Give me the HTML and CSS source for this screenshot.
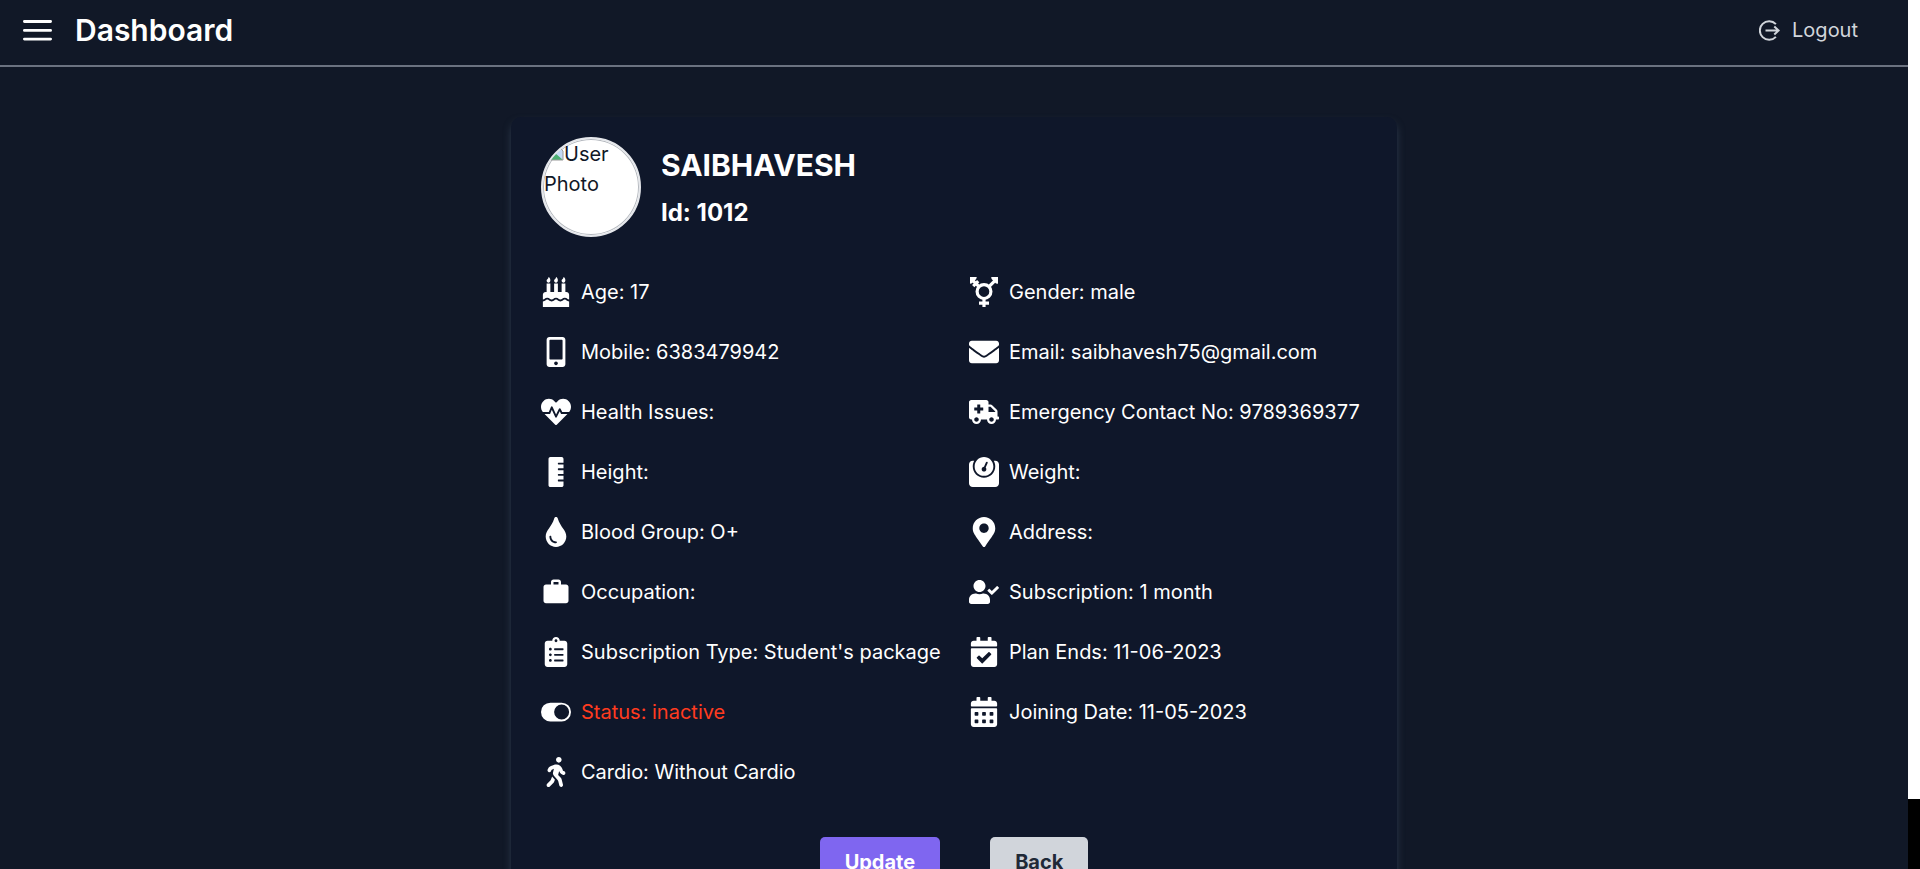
FILE: index.html
```html
<!DOCTYPE html>
<html lang="en">
<head>
<meta charset="utf-8">
<meta name="viewport" content="width=device-width, initial-scale=1">
<title>Dashboard</title>
<link rel="stylesheet" href="styles.css">
</head>
<body>
<div class="shell">
<div class="page">
  <header class="topbar">
    <button class="menu" type="button" aria-label="Open menu">
      <svg viewBox="0 0 30 30" fill="none" stroke="currentColor" stroke-width="2.8" stroke-linecap="round"><path d="M1.9 6.5h26.2M1.9 15.4h26.2M1.9 24.1h26.2"/></svg>
    </button>
    <h1 class="title">Dashboard</h1>
    <button class="logout" type="button">
      <svg viewBox="0 0 21 21" fill="none" stroke="currentColor" stroke-width="2"><path d="M16.9 4.1A9.3 9.3 0 1 0 16.9 16.9"/><path d="M6.5 10.5H19.5M15.3 6.6L19.6 10.5L15.3 14.4"/></svg>
      <span>Logout</span>
    </button>
  </header>
  <main class="main">
    <section class="card">
      <div class="profile">
        <div class="avatar"><svg viewBox="0 0 16 16"><path fill="#c3d9f5" d="M1 1h9l5 5v9H1z"/><path fill="#4caf72" d="M1 15l6-7 8 7z"/><path fill="none" stroke="#9a9a9a" d="M1 1h9l5 5v9H1z"/></svg>User Photo</div>
        <div class="who">
          <h2 class="name">SAIBHAVESH</h2>
          <p class="id">Id: 1012</p>
        </div>
      </div>
      <ul class="details">
        <li><svg viewBox="0 0 448 512"><path d="M448 384c-28.02 0-31.26-32-74.5-32-43.43 0-46.825 32-74.75 32-27.695 0-31.454-32-74.75-32-42.842 0-47.218 32-74.5 32-28.148 0-31.202-32-74.75-32-43.547 0-46.653 32-74.75 32v-80c0-26.5 21.5-48 48-48h16V112h64v144h64V112h64v144h64V112h64v144h16c26.5 0 48 21.5 48 48v80zm0 128H0v-96c43.356 0 46.767-32 74.75-32 27.951 0 31.253 32 74.75 32 42.843 0 47.217-32 74.5-32 28.148 0 31.201 32 74.75 32 43.357 0 46.767-32 74.75-32 27.488 0 31.252 32 74.5 32v96zM96 96c-17.75 0-32-14.25-32-32 0-31 32-23 32-64 12 0 32 29.5 32 56s-14.25 40-32 40zm128 0c-17.75 0-32-14.25-32-32 0-31 32-23 32-64 12 0 32 29.5 32 56s-14.25 40-32 40zm128 0c-17.75 0-32-14.25-32-32 0-31 32-23 32-64 12 0 32 29.5 32 56s-14.25 40-32 40z"/></svg>Age: 17</li>
        <li><svg viewBox="0 0 30 30"><g fill="none" stroke="#fff" stroke-width="3.2"><circle cx="15" cy="14.6" r="6.9"/><path d="M15 21.5V30M10 26.1h10M20 9.7L27 2.7M10 9.7L3 2.7M4.2 9.2L9.2 4.2"/></g><path d="M22.2 0H29v6.8L27 6.4 22.6 2zM1 0h6.8L7.2 2 3 6.2 1 6.8z"/></svg>Gender: male</li>
        <li><svg viewBox="0 0 320 512"><path d="M272 0H48C21.5 0 0 21.5 0 48v416c0 26.5 21.5 48 48 48h224c26.5 0 48-21.5 48-48V48c0-26.5-21.5-48-48-48zM160 480c-17.7 0-32-14.3-32-32s14.3-32 32-32 32 14.3 32 32-14.3 32-32 32zm112-108c0 6.6-5.4 12-12 12H60c-6.6 0-12-5.4-12-12V60c0-6.6 5.4-12 12-12h200c6.6 0 12 5.4 12 12v312z"/></svg>Mobile: 6383479942</li>
        <li><svg viewBox="0 0 512 512"><path d="M502.3 190.8c3.9-3.1 9.7-.2 9.7 4.7V400c0 26.5-21.5 48-48 48H48c-26.5 0-48-21.5-48-48V195.6c0-5 5.7-7.8 9.7-4.7 22.4 17.4 52.1 39.5 154.1 113.6 21.1 15.4 56.7 47.8 92.2 47.6 35.7.3 72-32.8 92.3-47.6 102-74.1 131.6-96.3 154-113.7zM256 320c23.2.4 56.6-29.2 73.4-41.4 132.7-96.3 142.8-104.7 173.4-128.7 5.8-4.5 9.2-11.5 9.2-18.9v-19c0-26.5-21.5-48-48-48H48c-26.5 0-48 21.5-48 48v19c0 7.4 3.4 14.3 9.2 18.9 30.6 23.9 40.7 32.4 173.4 128.7 16.8 12.2 50.2 41.8 73.4 41.4z"/></svg>Email: saibhavesh75@gmail.com</li>
        <li><svg viewBox="0 0 512 512"><path d="M320.2 243.8l-49.7 99.4c-6 12.1-23.4 11.7-28.9-.6l-56.9-126.3-30 71.7H60.6l182.5 186.5c7.1 7.3 18.6 7.3 25.7 0L451.4 288H342.3l-22.1-44.2zM473.7 73.9l-2.4-2.5c-51.5-52.6-135.8-52.6-187.4 0L256 100l-27.9-28.5c-51.5-52.7-135.9-52.7-187.4 0l-2.4 2.4C-10.4 123.7-12.5 203 31 256h102.4l35.9-86.2c5.4-12.9 23.6-13.2 29.4-.4l58.2 129.3 49-97.9c5.9-11.8 22.7-11.8 28.6 0l27.6 55.2H481c43.5-53 41.4-132.3-7.3-182.1z"/></svg>Health Issues:</li>
        <li><svg viewBox="0 0 640 512"><path d="M624 352h-16V243.9c0-12.7-5.1-24.9-14.1-33.9L494 110.1c-9-9-21.2-14.1-33.9-14.1H416V48c0-26.5-21.5-48-48-48H48C21.5 0 0 21.5 0 48v320c0 26.5 21.5 48 48 48h16c0 53 43 96 96 96s96-43 96-96h128c0 53 43 96 96 96s96-43 96-96h48c8.8 0 16-7.2 16-16v-32c0-8.8-7.2-16-16-16zM160 464c-26.5 0-48-21.5-48-48s21.5-48 48-48 48 21.5 48 48-21.5 48-48 48zm144-248c0 4.4-3.6 8-8 8h-56v56c0 4.4-3.6 8-8 8h-48c-4.4 0-8-3.6-8-8v-56h-56c-4.4 0-8-3.6-8-8v-48c0-4.4 3.6-8 8-8h56v-56c0-4.4 3.6-8 8-8h48c4.4 0 8 3.6 8 8v56h56c4.4 0 8 3.6 8 8v48zm176 248c-26.5 0-48-21.5-48-48s21.5-48 48-48 48 21.5 48 48-21.5 48-48 48zm80-208H416V144h44.1l99.9 99.9V256z"/></svg>Emergency Contact No: 9789369377</li>
        <li><svg viewBox="0 0 256 512"><path d="M168 416c-4.42 0-8-3.58-8-8v-16c0-4.42 3.58-8 8-8h88v-64h-88c-4.42 0-8-3.58-8-8v-16c0-4.42 3.58-8 8-8h88v-64h-88c-4.42 0-8-3.58-8-8v-16c0-4.42 3.58-8 8-8h88v-64h-88c-4.42 0-8-3.58-8-8v-16c0-4.42 3.58-8 8-8h88V32c0-17.67-14.33-32-32-32H32C14.33 0 0 14.33 0 32v448c0 17.67 14.33 32 32 32h192c17.67 0 32-14.33 32-32v-64h-88z"/></svg>Height:</li>
        <li><svg viewBox="0 0 512 512"><path d="M448 64h-25.98C438.44 92.28 448 125.01 448 160c0 105.87-86.13 192-192 192S64 265.87 64 160c0-34.99 9.56-67.72 25.98-96H64C28.71 64 0 92.71 0 128v320c0 35.29 28.71 64 64 64h384c35.29 0 64-28.71 64-64V128c0-35.29-28.71-64-64-64zM256 320c88.37 0 160-71.63 160-160S344.37 0 256 0 96 71.63 96 160s71.63 160 160 160zm-.3-151.94l33.58-78.36c3.5-8.17 12.94-11.92 21.03-8.41 8.12 3.48 11.88 12.89 8.41 21l-33.67 78.55C291.73 188 296 197.45 296 208c0 22.09-17.91 40-40 40s-40-17.91-40-40c0-21.98 17.76-39.77 39.7-39.94z"/></svg>Weight:</li>
        <li><svg viewBox="0 0 352 512"><path d="M205.22 22.09c-7.94-28.78-49.44-30.12-58.44 0C100.01 179.85 0 222.72 0 333.91 0 432.35 78.72 512 176 512s176-79.65 176-178.09c0-111.75-99.79-153.34-146.78-311.82zM176 448c-61.75 0-112-50.25-112-112 0-8.84 7.16-16 16-16s16 7.16 16 16c0 44.11 35.89 80 80 80 8.84 0 16 7.16 16 16s-7.16 16-16 16z"/></svg>Blood Group: O+</li>
        <li><svg viewBox="0 0 384 512"><path d="M172.268 501.67C26.97 291.031 0 269.413 0 192 0 85.961 85.961 0 192 0s192 85.961 192 192c0 77.413-26.97 99.031-172.268 309.67-9.535 13.774-29.93 13.773-39.464 0zM192 272c44.183 0 80-35.817 80-80s-35.817-80-80-80-80 35.817-80 80 35.817 80 80 80z"/></svg>Address:</li>
        <li><svg viewBox="0 0 24 24"><path d="M20 6h-4V4c0-1.11-.89-2-2-2h-4c-1.11 0-2 .89-2 2v2H4c-1.11 0-1.99.89-1.99 2L2 19c0 1.11.89 2 2 2h16c1.11 0 2-.89 2-2V8c0-1.11-.89-2-2-2zm-6 0h-4V4h4v2z"/></svg>Occupation:</li>
        <li><svg viewBox="0 0 640 512"><path d="M224 256c70.7 0 128-57.3 128-128S294.7 0 224 0 96 57.3 96 128s57.3 128 128 128zm89.6 32h-16.7c-22.2 10.2-46.9 16-72.9 16s-50.6-5.8-72.9-16h-16.7C60.2 288 0 348.2 0 422.4V464c0 26.5 21.5 48 48 48h352c26.5 0 48-21.5 48-48v-41.6c0-74.2-60.2-134.4-134.4-134.4zm323-128.4l-27.8-28.1c-4.6-4.7-12.1-4.7-16.8-.1l-104.8 104-45.5-45.8c-4.6-4.7-12.1-4.7-16.8-.1l-28.1 27.9c-4.7 4.6-4.7 12.1-.1 16.8l81.7 82.3c4.6 4.7 12.1 4.7 16.8.1l141.3-140.2c4.6-4.7 4.7-12.2.1-16.8z"/></svg>Subscription: 1 month</li>
        <li><svg viewBox="0 0 384 512"><path d="M336 64h-80c0-35.3-28.7-64-64-64s-64 28.7-64 64H48C21.5 64 0 85.5 0 112v352c0 26.5 21.5 48 48 48h288c26.5 0 48-21.5 48-48V112c0-26.5-21.5-48-48-48zM96 424c-13.3 0-24-10.7-24-24s10.7-24 24-24 24 10.7 24 24-10.7 24-24 24zm0-96c-13.3 0-24-10.7-24-24s10.7-24 24-24 24 10.7 24 24-10.7 24-24 24zm0-96c-13.3 0-24-10.7-24-24s10.7-24 24-24 24 10.7 24 24-10.7 24-24 24zm96-192c13.3 0 24 10.7 24 24s-10.7 24-24 24-24-10.7-24-24 10.7-24 24-24zm128 368c0 4.4-3.6 8-8 8H168c-4.4 0-8-3.6-8-8v-16c0-4.4 3.6-8 8-8h144c4.4 0 8 3.6 8 8v16zm0-96c0 4.4-3.6 8-8 8H168c-4.4 0-8-3.6-8-8v-16c0-4.4 3.6-8 8-8h144c4.4 0 8 3.6 8 8v16zm0-96c0 4.4-3.6 8-8 8H168c-4.4 0-8-3.6-8-8v-16c0-4.4 3.6-8 8-8h144c4.4 0 8 3.6 8 8v16z"/></svg>Subscription Type: Student's package</li>
        <li><svg viewBox="0 0 448 512"><path d="M436 160H12c-6.627 0-12-5.373-12-12v-36c0-26.51 21.49-48 48-48h48V12c0-6.627 5.373-12 12-12h40c6.627 0 12 5.373 12 12v52h128V12c0-6.627 5.373-12 12-12h40c6.627 0 12 5.373 12 12v52h48c26.51 0 48 21.49 48 48v36c0 6.627-5.373 12-12 12zM12 192h424c6.627 0 12 5.373 12 12v260c0 26.51-21.49 48-48 48H48c-26.51 0-48-21.49-48-48V204c0-6.627 5.373-12 12-12zm333.296 95.947l-28.169-28.398c-4.667-4.705-12.265-4.736-16.97-.068L194.12 364.665l-45.98-46.352c-4.667-4.705-12.266-4.736-16.971-.068l-28.397 28.17c-4.705 4.667-4.736 12.265-.068 16.97l82.601 83.269c4.667 4.705 12.265 4.736 16.97.068l142.953-141.805c4.705-4.667 4.736-12.265.068-16.97z"/></svg>Plan Ends: 11-06-2023</li>
        <li class="inactive"><svg viewBox="0 0 16 16"><path d="M5 3a5 5 0 0 0 0 10h6a5 5 0 0 0 0-10H5zm6 9a4 4 0 1 1 0-8 4 4 0 0 1 0 8z"/></svg>Status: inactive</li>
        <li><svg viewBox="0 0 448 512"><path fill-rule="evenodd" d="M436 160H12c-6.627 0-12-5.373-12-12v-36c0-26.51 21.49-48 48-48h48V12c0-6.627 5.373-12 12-12h40c6.627 0 12 5.373 12 12v52h128V12c0-6.627 5.373-12 12-12h40c6.627 0 12 5.373 12 12v52h48c26.51 0 48 21.49 48 48v36c0 6.627-5.373 12-12 12zM12 192h424c6.627 0 12 5.373 12 12v260c0 26.51-21.49 48-48 48H48c-26.51 0-48-21.49-48-48V204c0-6.627 5.373-12 12-12zM76 256h40q12 0 12 12v40q0 12-12 12H76q-12 0-12-12v-40q0-12 12-12zM204 256h40q12 0 12 12v40q0 12-12 12h-40q-12 0-12-12v-40q0-12 12-12zM332 256h40q12 0 12 12v40q0 12-12 12h-40q-12 0-12-12v-40q0-12 12-12zM76 384h40q12 0 12 12v40q0 12-12 12H76q-12 0-12-12v-40q0-12 12-12zM204 384h40q12 0 12 12v40q0 12-12 12h-40q-12 0-12-12v-40q0-12 12-12zM332 384h40q12 0 12 12v40q0 12-12 12h-40q-12 0-12-12v-40q0-12 12-12z"/></svg>Joining Date: 11-05-2023</li>
        <li><svg viewBox="0 0 320 512"><path d="M208 96c26.5 0 48-21.5 48-48S234.5 0 208 0s-48 21.5-48 48 21.5 48 48 48zm94.5 149.1l-23.3-11.8-9.7-29.4c-14.7-44.6-55.7-75.8-102.2-75.9-36-.1-55.9 10.1-93.3 25.2-21.6 8.7-39.3 25.2-49.7 46.2L17.6 213c-7.8 15.8-1.5 35 14.2 42.9 15.6 7.9 34.6 1.5 42.5-14.3L81 228c3.5-7 9.3-12.5 16.5-15.4l26.8-10.8-15.2 60.7c-5.2 20.8.4 42.9 14.9 58.8l59.9 65.4c7.2 7.9 12.3 17.4 14.9 27.7l18.3 73.3c4.3 17.1 21.7 27.6 38.8 23.3 17.1-4.3 27.6-21.7 23.3-38.8l-22.2-89c-2.6-10.3-7.7-19.9-14.9-27.7l-45.5-49.7 17.2-68.7 5.5 16.5c5.3 16.1 16.7 29.4 31.7 37l23.3 11.8c15.6 7.9 34.6 1.5 42.5-14.3 7.7-15.7 1.4-35.1-14.3-43zM73.6 385.8c-3.2 8.1-8 15.4-14.2 21.5l-50 50.1c-12.5 12.5-12.5 32.8 0 45.3s32.7 12.5 45.2 0l59.4-59.4c6.1-6.1 10.9-13.4 14.2-21.5l13.5-33.8c-55.3-60.3-38.7-41.8-47.4-53.7l-20.7 51.5z"/></svg>Cardio: Without Cardio</li>
      </ul>
      <div class="actions">
        <button class="btn btn-primary" type="button">Update</button>
        <button class="btn btn-secondary" type="button">Back</button>
      </div>
    </section>
  </main>
</div>
<div class="scrollbar"><div class="thumb"></div></div>
</div>
</body>
</html>
```
FILE: styles.css
```css
* { box-sizing: border-box; }
body {
  margin: 0;
  background: #111827;
  color: #fff;
  font: 400 20px/30px Inter, "Liberation Sans", sans-serif;
}
h1, h2, p, ul { margin: 0; padding: 0; }
button {
  border: 0;
  background: none;
  padding: 0;
  color: inherit;
  font: inherit;
  cursor: pointer;
}
.shell { display: flex; height: 100vh; overflow: hidden; }
.page { flex: 1; min-width: 0; }
.scrollbar { width: 12px; background: #000; }
.thumb { height: 92%; background: #fff; }
.topbar {
  display: flex;
  align-items: center;
  padding: 10px 50px 15px 22px;
  border-bottom: 2px solid #6b7280;
}
.menu svg { display: block; width: 31px; height: 30px; }
.title {
  margin-left: 22px;
  font-size: 30px;
  line-height: 40px;
  font-weight: 600;
}
.logout {
  display: flex;
  align-items: center;
  gap: 12px;
  margin-left: auto;
  color: #d1d5db;
}
.logout svg { width: 21px; height: 21px; }
.main { padding-top: 50px; }
.card {
  width: fit-content;
  max-width: 886px;
  margin: 0 auto;
  padding: 20px 30px;
  border-radius: 10px;
  background: #0f172a;
  box-shadow: 0 5px 8px -1px #334155;
}
.profile { display: flex; align-items: center; gap: 20px; }
.avatar {
  width: 100px;
  height: 100px;
  overflow: hidden;
  padding: 0 1px;
  border: 2px solid #e5e7eb;
  border-radius: 50%;
  background: #fff;
  box-shadow: inset 0 0 0 1px #b4b8be;
  color: #111827;
}
.avatar svg { width: 16px; height: 16px; margin: 0 0 0 4px; }
.name { font-size: 30px; line-height: 40px; font-weight: 700; }
.id { margin-top: 10px; font-size: 24px; line-height: 35px; font-weight: 700; }
.details {
  display: grid;
  grid-template-columns: repeat(2, minmax(0, 1fr));
  gap: 30px;
  margin-top: 40px;
  list-style: none;
}
.details li {
  display: flex;
  align-items: center;
  gap: 10px;
  white-space: nowrap;
}
.details svg { flex: none; width: 30px; height: 30px; fill: #fff; }
.inactive { color: #ff3b1f; }
.actions {
  display: flex;
  justify-content: center;
  gap: 50px;
  margin-top: 50px;
}
.btn {
  padding: 10px 25px;
  border-radius: 5px;
  font-weight: 700;
}
.btn-primary { background: #7f66f0; }
.btn-secondary { background: #d1d5db; color: #1f2937; }
```
